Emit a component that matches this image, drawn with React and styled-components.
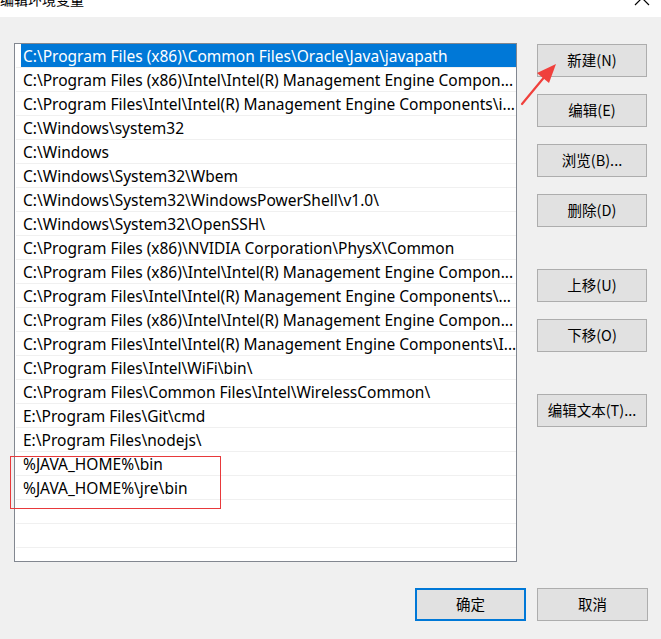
import React from "react";
import styled, { createGlobalStyle } from "styled-components";

const Global = createGlobalStyle`
  html, body { margin: 0; padding: 0; }
  body {
    background: #f0f0f0;
    font-family: "Noto Sans", "Noto Sans CJK SC", sans-serif;
    color: #000;
    width: 661px;
    height: 639px;
    overflow: hidden;
  }
`;

const Window = styled.div`
  position: relative;
  width: 661px;
  height: 639px;
  display: flex;
  flex-direction: column;
`;

const TitleBar = styled.div`
  height: 17px;
  background: #fff;
  display: flex;
  align-items: flex-end;
  justify-content: space-between;
  overflow: hidden;
  position: relative;
`;

const Title = styled.span`
  font-family: "Noto Sans CJK SC", sans-serif;
  font-size: 14px;
  line-height: 14px;
  margin-bottom: 11px;
`;

const Close = styled.svg`
  margin-right: 11px;
  margin-bottom: 11px;
`;

const Body = styled.div`
  display: flex;
  padding: 26px 0 0 14px;
  gap: 20px;
`;

const ListBox = styled.div`
  width: 501px;
  height: 517px;
  border: 1px solid #828790;
  background: #fff;
  display: flex;
  flex-direction: column;
  position: relative;
`;

const Row = styled.div`
  height: 23px;
  border-bottom: 1px solid #f0f0f0;
  margin-left: 1px;
  display: flex;
  align-items: center;
  flex-shrink: 0;
  overflow: hidden;
`;

const RowText = styled.span`
  box-sizing: border-box;
  height: 23px;
  line-height: 23px;
  padding: 1px 0 0 2px;
  margin-left: 5px;
  font-size: 15.5px;
  white-space: nowrap;
  flex: ${(p) => (p.$selected ? 1 : "0 0 auto")};
  background: ${(p) => (p.$selected ? "#0078d7" : "transparent")};
  color: ${(p) => (p.$selected ? "#fff" : "#000")};
`;

const Highlight = styled.div`
  position: absolute;
  left: -5px;
  top: 412px;
  width: 209px;
  height: 51px;
  border: 1px solid #e8393b;
`;

const Side = styled.div`
  display: flex;
  flex-direction: column;
  padding-top: 1px;
`;

const Button = styled.div`
  box-sizing: border-box;
  width: ${(p) => p.$width || 110}px;
  height: 33px;
  background: #e1e1e1;
  border: ${(p) => (p.$default ? "2px solid #0078d7" : "1px solid #adadad")};
  display: flex;
  align-items: center;
  justify-content: center;
  padding-bottom: 2px;
  font-family: "Noto Sans CJK SC", sans-serif;
  font-size: 14.5px;
  margin-top: ${(p) => p.$gap || 0}px;
`;

const Footer = styled.div`
  display: flex;
  justify-content: flex-end;
  gap: 11px;
  padding: 26px 13px 0 0;
`;

const Arrow = styled.svg`
  position: absolute;
  left: 515px;
  top: 58px;
`;

const rows = [
  "C:\\Program Files (x86)\\Common Files\\Oracle\\Java\\javapath",
  "C:\\Program Files (x86)\\Intel\\Intel(R) Management Engine Compon...",
  "C:\\Program Files\\Intel\\Intel(R) Management Engine Components\\i...",
  "C:\\Windows\\system32",
  "C:\\Windows",
  "C:\\Windows\\System32\\Wbem",
  "C:\\Windows\\System32\\WindowsPowerShell\\v1.0\\",
  "C:\\Windows\\System32\\OpenSSH\\",
  "C:\\Program Files (x86)\\NVIDIA Corporation\\PhysX\\Common",
  "C:\\Program Files (x86)\\Intel\\Intel(R) Management Engine Compon...",
  "C:\\Program Files\\Intel\\Intel(R) Management Engine Components\\...",
  "C:\\Program Files (x86)\\Intel\\Intel(R) Management Engine Compon...",
  "C:\\Program Files\\Intel\\Intel(R) Management Engine Components\\I...",
  "C:\\Program Files\\Intel\\WiFi\\bin\\",
  "C:\\Program Files\\Common Files\\Intel\\WirelessCommon\\",
  "E:\\Program Files\\Git\\cmd",
  "E:\\Program Files\\nodejs\\",
  "%JAVA_HOME%\\bin",
  "%JAVA_HOME%\\jre\\bin",
  "",
  "",
];

const buttons = [
  ["新建(N)", 0],
  ["编辑(E)", 17],
  ["浏览(B)...", 17],
  ["删除(D)", 17],
  ["上移(U)", 42],
  ["下移(O)", 17],
  ["编辑文本(T)...", 42],
];

export default function App() {
  return (
    <Window>
      <Global />
      <TitleBar>
        <Title>编辑环境变量</Title>
        <Close width="16" height="16" viewBox="0 0 16 16">
          <path d="M1 1 L15 15 M15 1 L1 15" stroke="#000" strokeWidth="1.2" fill="none" />
        </Close>
      </TitleBar>
      <Body>
        <ListBox>
          {rows.map((r, i) => (
            <Row key={i}>
              <RowText $selected={i === 0}>{r}</RowText>
            </Row>
          ))}
          <Highlight />
        </ListBox>
        <Side>
          {buttons.map(([t, g]) => (
            <Button key={t} $gap={g}>{t}</Button>
          ))}
        </Side>
      </Body>
      <Footer>
        <Button $default $width={111}>确定</Button>
        <Button $width={111}>取消</Button>
      </Footer>
      <Arrow width="50" height="52" viewBox="0 0 50 52">
        <path d="M7 46 L31 17" stroke="#f0403c" strokeWidth="2.2" strokeLinecap="round" />
        <path d="M41 6 L22 15 L34 25 Z" fill="#f0403c" />
      </Arrow>
    </Window>
  );
}
